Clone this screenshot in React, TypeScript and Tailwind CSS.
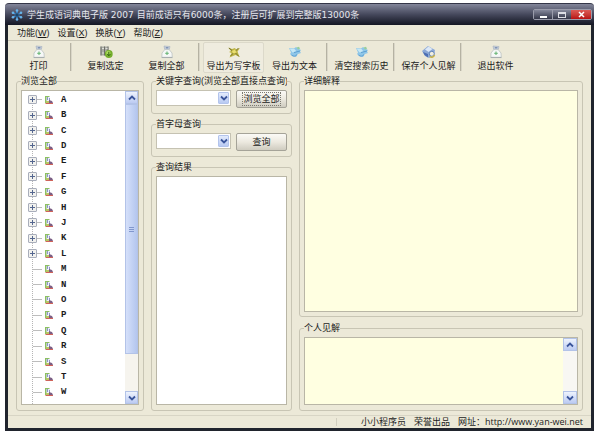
import React from 'react';

type IconName = 'bag' | 'copy' | 'wordpad' | 'bird' | 'save';

interface ToolItem {
    label: string;
    icon: IconName;
    active?: boolean;
    dividerAfter?: boolean;
}

const menus = [
    { label: '功能', hotkey: 'W' },
    { label: '设置', hotkey: 'X' },
    { label: '换肤', hotkey: 'Y' },
    { label: '帮助', hotkey: 'Z' },
];

const tools: ToolItem[] = [
    { label: '打印', icon: 'bag', dividerAfter: true },
    { label: '复制选定', icon: 'copy' },
    { label: '复制全部', icon: 'bag', dividerAfter: true },
    { label: '导出为写字板', icon: 'wordpad', active: true },
    { label: '导出为文本', icon: 'bird', dividerAfter: true },
    { label: '清空搜索历史', icon: 'bird', dividerAfter: true },
    { label: '保存个人见解', icon: 'save', dividerAfter: true },
    { label: '退出软件', icon: 'bag' },
];

const letters = 'ABCDEFGHJKLMNOPQRSTW'.split('');
const expandable = new Set('ABCDEFGHJKL'.split(''));

const ToolIcon: React.FC<{ name: IconName }> = ({ name }) => {
    switch (name) {
        case 'copy':
            return (
                <svg className="h-[14px] w-[14px]" viewBox="0 0 14 14">
                    <path d="M1.5 1.5h8v9h-8z" fill="#a9aaa3" />
                    <path d="M2 1.5v9M5.5 1.5v9M9 1.5v9" stroke="#6d6f68" />
                    <path d="M3 3.5h2M6.5 3.5h2M3 8h2M6.5 8h2" stroke="#dfe0da" />
                    <circle cx="9.8" cy="9" r="3.9" fill="#74ad2c" />
                    <circle cx="9.3" cy="8" r="2.2" fill="#a9d859" />
                    <path d="M9.8 6.8v3.6M8.2 9l1.6 1.8L11.4 9" stroke="#35690f" fill="none" />
                </svg>
            );
        case 'wordpad':
            return (
                <svg className="h-[14px] w-[14px]" viewBox="0 0 14 14">
                    <path d="M1 2.5l4 1.5 3-1 1 1.5 4-1.5-2.5 3.5 2 5.5-4-2-6 2.5L4.5 8 2 7l2-1z" fill="#bdb444" />
                    <path d="M3.5 11l8-8M2 3l3 2.5M8.5 8l3.5 3.5" stroke="#77742f" strokeWidth="1" />
                    <path d="M5 6l3-1.5 1.5 3L6 8.5z" fill="#e9de70" />
                </svg>
            );
        case 'bird':
            return (
                <svg className="h-[14px] w-[14px]" viewBox="0 0 14 14">
                    <path d="M1 3l5 .5L8 2l2 1.5L13 5l-1 1.5 1 1.5-3 1-2 3-4-1-2-2 1-1.5z" fill="#8fc6e8" />
                    <path d="M1.5 3.5l5 .5 2 2.5-4 1z" fill="#c6e8f6" />
                    <path d="M3.5 10c2 1.8 4 1.5 5.5-.5M6 7.5l6-1.5" stroke="#5b9fd2" fill="none" />
                    <path d="M8.5 2.5L11 1.8l1 2-2 .7z" fill="#98cf9a" />
                </svg>
            );
        case 'save':
            return (
                <svg className="h-[14px] w-[14px]" viewBox="0 0 14 14">
                    <path d="M0 6l6-5 7 4-1 5-5 3-4-2z" fill="#8ba8d6" />
                    <path d="M3 4.5L6.5 1.5l4 2.5-4 3z" fill="#dce8f7" />
                    <path d="M1 7l5 2v3.5L2.5 10z" fill="#4d6fb3" />
                    <circle cx="9.8" cy="8.8" r="2.5" fill="#f0eedf" stroke="#5f83bb" />
                    <path d="M7.8 11.6a3 3 0 0 0 4.7-1.8" stroke="#cbb447" strokeWidth="1.4" fill="none" />
                </svg>
            );
        default:
            return (
                <svg className="h-[14px] w-[14px]" viewBox="0 0 14 14">
                    <path d="M4 1l6 .5-.8 3.3H4.8z" fill="#c9d1dc" stroke="#a5aebd" strokeWidth=".6" />
                    <path d="M5.8 2.2h2.6v1.2H5.8z" fill="#6f86ad" />
                    <path d="M4.8 4.6h4.4L12 8l.3 4.6H1.8L2 8z" fill="#f6f8f7" stroke="#bcc3c3" strokeWidth=".8" />
                    <path d="M1.8 12.4h10.5" stroke="#a4abac" />
                    <path d="M7 6.6v3.4M5.3 8.3h3.4" stroke="#74bb80" strokeWidth="1.2" />
                </svg>
            );
    }
};

const AppLogo = () => (
    <svg className="h-3 w-3" viewBox="0 0 12 12">
        <path d="M6 1v10M1.5 3.5l9 5M10.5 3.5l-9 5" stroke="#3f8fd2" strokeWidth="1.4" />
        <circle cx="6" cy="6" r="1.8" fill="#1d4568" />
        <g fill="#67b4ea">
            <circle cx="6" cy="1.5" r="1.3" />
            <circle cx="2" cy="3.8" r="1.3" />
            <circle cx="10" cy="3.8" r="1.3" />
            <circle cx="2" cy="8.2" r="1.3" />
            <circle cx="10" cy="8.2" r="1.3" />
            <circle cx="6" cy="10.5" r="1.3" />
        </g>
    </svg>
);

const BookIcon = () => (
    <svg className="h-2 w-2 shrink-0" viewBox="0 0 8 8">
        <path d="M0 0h4l1 1v6H0z" fill="#8cbf62" />
        <path d="M1.5 1h3.5v4H1.5z" fill="#eef1fb" />
        <path d="M2.5 1v3M4.5 2v3" stroke="#767dbd" strokeWidth=".8" />
        <path d="M0 7h8v1H1z" fill="#cf635a" />
        <path d="M4 4l3 1 1 2H4z" fill="#7c5f85" />
        <path d="M1 6h3" stroke="#e6c965" />
    </svg>
);

const Chevron: React.FC<{ up?: boolean }> = ({ up }) => (
    <svg className="h-2 w-2" viewBox="0 0 8 8" fill="none" stroke="#3a559b" strokeWidth="1.8">
        <path d={up ? 'M1 5.5l3-3 3 3' : 'M1 2.5l3 3 3-3'} />
    </svg>
);

const ScrollButton: React.FC<{ up?: boolean }> = ({ up }) => (
    <button
        aria-label={up ? '向上滚动' : '向下滚动'}
        className="flex h-[13px] w-full shrink-0 items-center justify-center border border-[#b3c3e8] bg-linear-to-b from-[#eef3fd] to-[#bccbf2]"
    >
        <Chevron up={up} />
    </button>
);

const Group: React.FC<{ title: string; className?: string; children: React.ReactNode }> = ({ title, className = '', children }) => (
    <fieldset className={`flex min-w-0 rounded-[3px] border border-[#c8c5b4] px-1 pt-[3px] ${className}`}>
        <legend className="max-w-full overflow-hidden leading-3 whitespace-nowrap">{title}</legend>
        {children}
    </fieldset>
);

const Combo: React.FC<{ label: string }> = ({ label }) => (
    <div className="relative h-4 w-[75px]">
        <select aria-label={label} className="block h-full w-full appearance-none border border-[#c5c2b2] bg-white pl-1">
            <option></option>
        </select>
        <span className="pointer-events-none absolute top-[2px] right-[2px] flex h-3 w-[11px] items-center justify-center rounded-[1px] border border-[#b3c4ec] bg-linear-to-b from-[#e3ebfc] to-[#b9caf2]">
            <Chevron />
        </span>
    </div>
);

const PushButton: React.FC<{ focused?: boolean; children: React.ReactNode }> = ({ focused, children }) => (
    <button className="flex h-[18px] w-[51px] items-center justify-center rounded-[2px] border border-[#a5a398] bg-linear-to-b from-[#fbfaf6] via-[#ece9df] to-[#cfccc0]">
        <span className={focused ? 'border border-dotted border-[#7b796f] leading-3' : 'leading-3'}>{children}</span>
    </button>
);

const TitleBar = () => (
    <header className="flex h-[22px] items-center rounded-t-[4px] border-t border-[#343648] bg-linear-to-b from-[#83869a] via-[#45485c] to-[#151724] pr-[2px] pl-[6px]">
        <AppLogo />
        <h1 className="ml-1 flex-1 truncate font-['DejaVu_Sans','Noto_Sans_CJK_SC',sans-serif] text-[9px] leading-3 text-[#e6e7ee]">
            学生成语词典电子版 2007 目前成语只有6000条，注册后可扩展到完整版13000条
        </h1>
        <div className="flex h-[11px] overflow-hidden rounded-[2px] border border-[#9a9cab]">
            <button aria-label="最小化" className="flex w-[19px] items-end justify-center border-r border-[#9a9cab] bg-linear-to-b from-[#85889b] to-[#343749] pb-[1px]">
                <span className="h-[2px] w-[7px] bg-white" />
            </button>
            <button aria-label="最大化" className="flex w-[18px] items-center justify-center bg-linear-to-b from-[#85889b] to-[#343749]">
                <span className="h-[6px] w-2 border border-t-2 border-[#dcdde4]" />
            </button>
            <button aria-label="关闭" className="flex w-5 items-center justify-center bg-linear-to-b from-[#dc5a55] to-[#b80d12]">
                <svg className="h-[7px] w-[7px]" viewBox="0 0 7 7">
                    <path d="M1 1l5 5M6 1L1 6" stroke="#fff" strokeWidth="1.5" />
                </svg>
            </button>
        </div>
    </header>
);

const Toolbar = () => (
    <div className="flex items-start pt-[1px] pb-[2px]">
        {tools.map((tool) => (
            <React.Fragment key={tool.label}>
                <button
                    className={`flex h-[31px] w-[61px] flex-col items-center gap-px border pt-[2px] whitespace-nowrap ${
                        tool.active ? 'rounded-[2px] border-[#dcd9ca] bg-[#efecdf]' : 'border-transparent'
                    }`}
                >
                    <ToolIcon name={tool.icon} />
                    <span className="leading-3">{tool.label}</span>
                </button>
                {tool.dividerAfter && <span className="mt-[1px] mr-[3px] ml-[1px] h-7 w-[2px] border-r border-l border-r-[#d9d6c8] border-l-[#b5b2a3]" />}
            </React.Fragment>
        ))}
    </div>
);

const LetterTree = () => (
    <div className="flex flex-1 border border-[#b9b6a6] bg-white">
        <ul className="relative flex flex-1 flex-col pt-[1px] pb-1">
            <li aria-hidden="true" className="absolute top-2 bottom-0 left-[10px] border-l border-dotted border-[#b5b5b5]" />
            {letters.map((letter) => (
                <li key={letter} className="relative flex flex-1 items-center pl-[6px]">
                    {expandable.has(letter) ? (
                        <button aria-label={`展开 ${letter}`} className="flex h-[9px] w-[9px] items-center justify-center rounded-[1px] border border-[#a9aebb] bg-[#f1f1ee]">
                            <svg className="h-[5px] w-[5px]" viewBox="0 0 5 5">
                                <path d="M2.5 0v5M0 2.5h5" stroke="#54668f" />
                            </svg>
                        </button>
                    ) : (
                        <span className="ml-[5px] w-1 border-t border-[#bdbdbd]" />
                    )}
                    <span className="mr-[3px] w-[5px] border-t border-[#bdbdbd]" />
                    <BookIcon />
                    <span className="ml-2 font-['Liberation_Mono',monospace] text-[9px] leading-3 font-bold">{letter}</span>
                </li>
            ))}
        </ul>
        <div className="flex w-[13px] flex-col bg-[#f6f4ee]">
            <ScrollButton up />
            <div className="flex flex-5 flex-col items-center justify-center gap-[1px] border border-[#b3c3e8] bg-linear-to-r from-[#d5e0fa] to-[#b4c6ee]">
                <span className="h-px w-[5px] bg-[#8197cd]" />
                <span className="h-px w-[5px] bg-[#8197cd]" />
                <span className="h-px w-[5px] bg-[#8197cd]" />
            </div>
            <div className="h-[37px]" />
            <ScrollButton />
        </div>
    </div>
);

export default function App() {
    return (
        <div className="flex min-h-screen flex-col bg-white pt-[3px] pr-[6px] pb-1 pl-[5px] font-['Liberation_Sans','Noto_Sans_CJK_SC',sans-serif] text-[9px] leading-3 text-[#1b1b1b]">
            <TitleBar />
            <div className="flex flex-1 flex-col border-x-[3px] border-b-[3px] border-[#20242d] bg-[#ece9d8]">
                <nav className="flex h-4 items-center gap-2 border-b border-[#c9c6b6] pl-[9px]">
                    {menus.map((menu) => (
                        <button key={menu.label}>
                            {menu.label}(<u>{menu.hotkey}</u>)
                        </button>
                    ))}
                </nav>
                <Toolbar />
                <main className="grid flex-1 grid-cols-[128px_141px_minmax(0,1fr)] gap-x-[7px] pr-2 pb-1 pl-2">
                    <Group title="浏览全部" className="pb-[5px]">
                        <LetterTree />
                    </Group>
                    <div className="flex flex-col gap-1">
                        <Group title="关键字查询(浏览全部直接点查询)" className="justify-between pb-[5px]">
                            <Combo label="关键字查询" />
                            <PushButton focused>浏览全部</PushButton>
                        </Group>
                        <Group title="首字母查询" className="justify-between pb-[5px]">
                            <Combo label="首字母查询" />
                            <PushButton>查询</PushButton>
                        </Group>
                        <Group title="查询结果" className="flex-1 pb-[5px]">
                            <div className="flex-1 border border-[#b9b6a6] bg-white" />
                        </Group>
                    </div>
                    <div className="flex flex-col gap-[5px]">
                        <Group title="详细解释" className="flex-1 pb-1">
                            <textarea aria-label="详细解释" readOnly className="min-w-0 flex-1 resize-none border border-[#b9b6a6] bg-[#ffffe1]" />
                        </Group>
                        <Group title="个人见解" className="pb-[5px]">
                            <div className="flex h-[68px] min-w-0 flex-1 border border-[#b9b6a6] bg-[#ffffe1]">
                                <textarea aria-label="个人见解" className="min-w-0 flex-1 resize-none overflow-hidden" />
                                <div className="flex w-[14px] flex-col justify-between bg-[#f8f7f3]">
                                    <ScrollButton up />
                                    <ScrollButton />
                                </div>
                            </div>
                        </Group>
                    </div>
                </main>
                <footer className="flex h-[13px] items-center justify-end border-t border-[#d8d5c5] pr-2">
                    <span className="mr-6 h-2 w-px bg-[#d2cfbf]" />
                    <p className="font-['Open_Sans','Noto_Sans_CJK_SC',sans-serif]">
                        <span className="mr-2">小小程序员</span>
                        <span className="mr-2">荣誉出品</span>
                        网址：<a href="http://www.yan-wei.net">http://www.yan-wei.net</a>
                    </p>
                </footer>
            </div>
        </div>
    );
}
